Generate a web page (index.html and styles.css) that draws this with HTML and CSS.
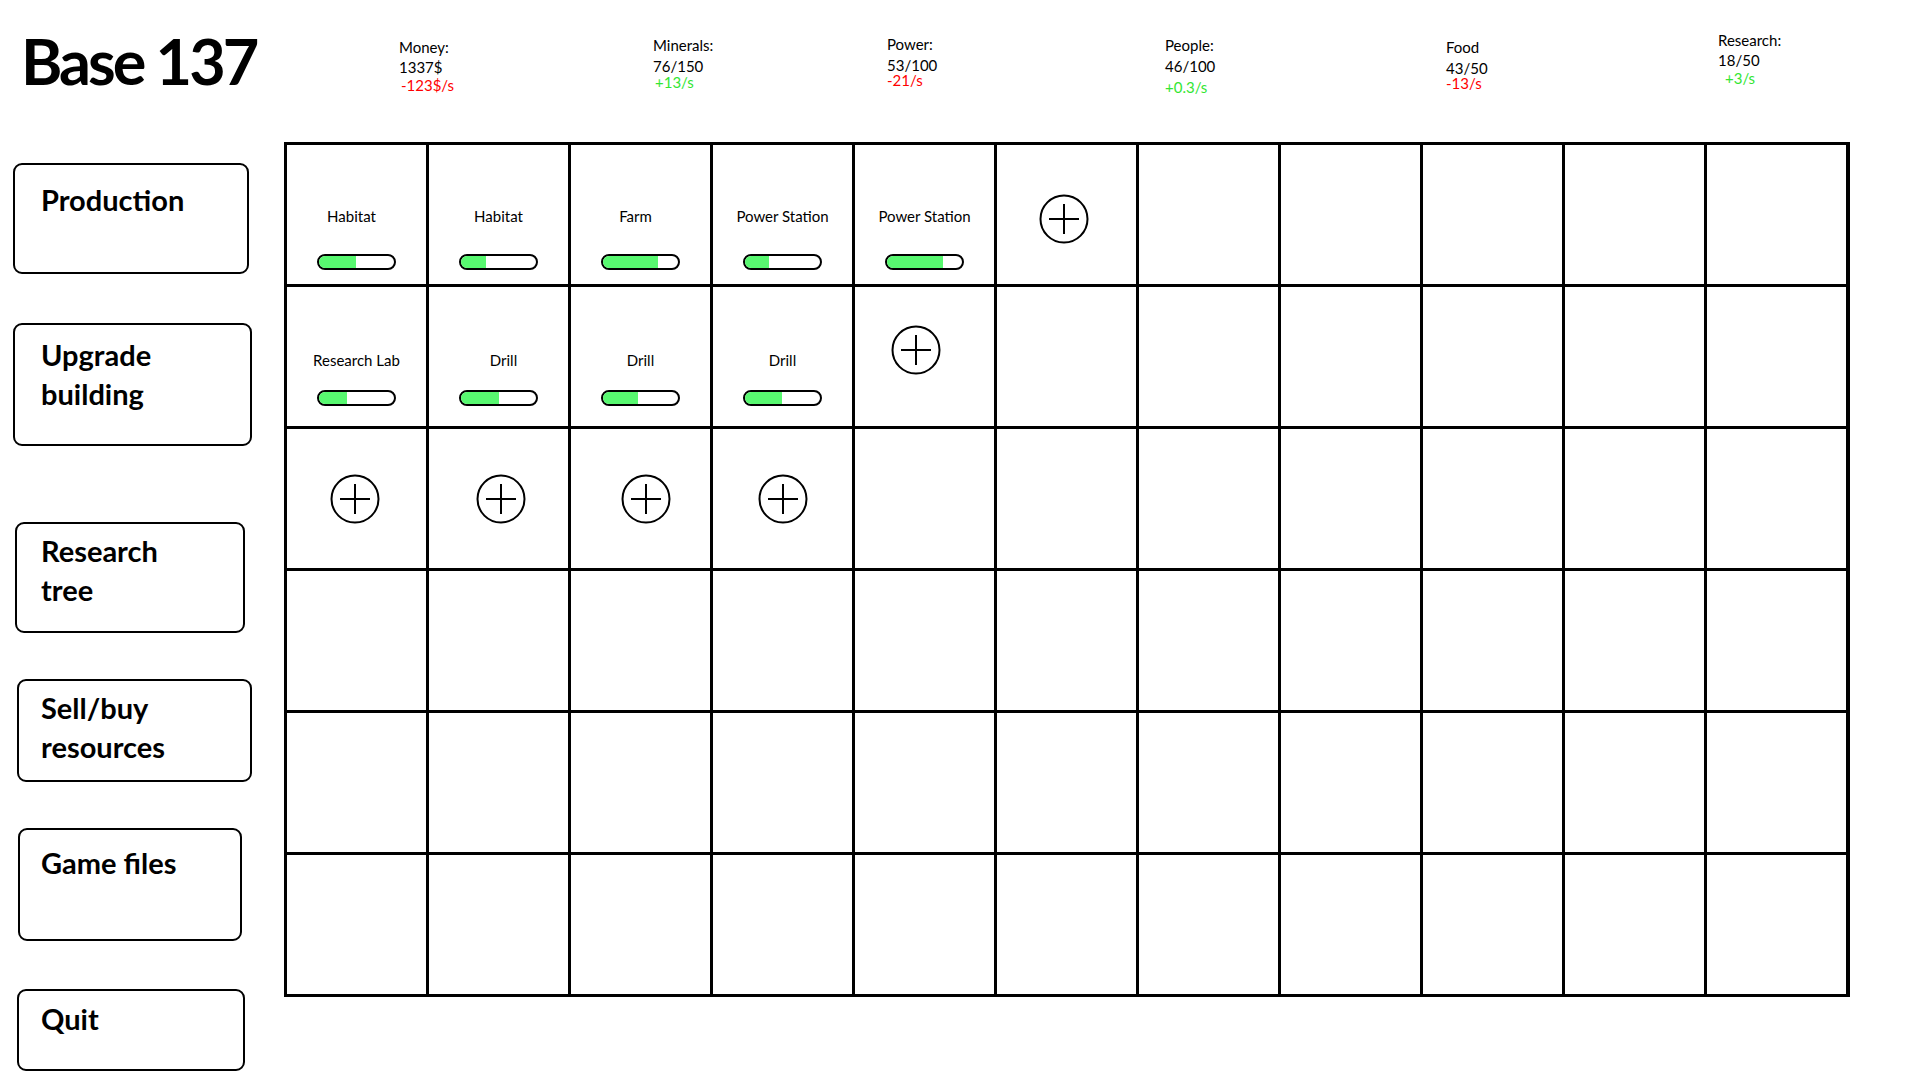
FILE: index.html
```html
<!DOCTYPE html>
<html lang="en">
<head>
<meta charset="utf-8">
<title>Base 137</title>
<link rel="stylesheet" href="styles.css">
</head>
<body>
<header class="header">
  <h1 class="title">Base 137</h1>
  <div class="stat s-money"><div class="lbl">Money:</div><div class="val">1337$</div><div class="rate neg">-123$/s</div></div>
  <div class="stat s-min"><div class="lbl">Minerals:</div><div class="val">76/150</div><div class="rate pos">+13/s</div></div>
  <div class="stat s-pow"><div class="lbl">Power:</div><div class="val">53/100</div><div class="rate neg">-21/s</div></div>
  <div class="stat s-ppl"><div class="lbl">People:</div><div class="val">46/100</div><div class="rate pos">+0.3/s</div></div>
  <div class="stat s-food"><div class="lbl">Food</div><div class="val">43/50</div><div class="rate neg">-13/s</div></div>
  <div class="stat s-res"><div class="lbl">Research:</div><div class="val">18/50</div><div class="rate pos">+3/s</div></div>
</header>
<main class="content">
  <nav class="sidebar">
    <div class="btn b-prod">Production</div>
    <div class="btn b-upg">Upgrade<br>building</div>
    <div class="btn b-res">Research<br>tree</div>
    <div class="btn b-sell">Sell/buy<br>resources</div>
    <div class="btn b-files">Game files</div>
    <div class="btn b-quit">Quit</div>
  </nav>
  <section class="board">
    <!-- row 1 -->
    <div class="cell bld r1"><div class="name nudge-l">Habitat</div><div class="bar"><div class="fill" style="width:49%"></div></div></div>
    <div class="cell bld r1"><div class="name">Habitat</div><div class="bar"><div class="fill" style="width:33%"></div></div></div>
    <div class="cell bld r1"><div class="name nudge-l">Farm</div><div class="bar"><div class="fill" style="width:73%"></div></div></div>
    <div class="cell bld r1"><div class="name">Power Station</div><div class="bar"><div class="fill" style="width:32%"></div></div></div>
    <div class="cell bld r1"><div class="name">Power Station</div><div class="bar"><div class="fill" style="width:75%"></div></div></div>
    <div class="cell add add-a"><svg class="plus" viewBox="0 0 50 50"><circle cx="25" cy="25" r="23.5"/><path d="M10 25H40M25 10V40"/></svg></div>
    <div class="cell"></div><div class="cell"></div><div class="cell"></div><div class="cell"></div><div class="cell"></div>
    <!-- row 2 -->
    <div class="cell bld r2"><div class="name">Research Lab</div><div class="bar"><div class="fill" style="width:37%"></div></div></div>
    <div class="cell bld r2"><div class="name nudge-r">Drill</div><div class="bar"><div class="fill" style="width:50%"></div></div></div>
    <div class="cell bld r2"><div class="name">Drill</div><div class="bar"><div class="fill" style="width:47%"></div></div></div>
    <div class="cell bld r2"><div class="name">Drill</div><div class="bar"><div class="fill" style="width:49%"></div></div></div>
    <div class="cell add add-b"><svg class="plus" viewBox="0 0 50 50"><circle cx="25" cy="25" r="23.5"/><path d="M10 25H40M25 10V40"/></svg></div>
    <div class="cell"></div><div class="cell"></div><div class="cell"></div><div class="cell"></div><div class="cell"></div><div class="cell"></div>
    <!-- row 3 -->
    <div class="cell add add-e"><svg class="plus" viewBox="0 0 50 50"><circle cx="25" cy="25" r="23.5"/><path d="M10 25H40M25 10V40"/></svg></div>
    <div class="cell add add-c"><svg class="plus" viewBox="0 0 50 50"><circle cx="25" cy="25" r="23.5"/><path d="M10 25H40M25 10V40"/></svg></div>
    <div class="cell add add-d"><svg class="plus" viewBox="0 0 50 50"><circle cx="25" cy="25" r="23.5"/><path d="M10 25H40M25 10V40"/></svg></div>
    <div class="cell add"><svg class="plus" viewBox="0 0 50 50"><circle cx="25" cy="25" r="23.5"/><path d="M10 25H40M25 10V40"/></svg></div>
    <div class="cell"></div><div class="cell"></div><div class="cell"></div><div class="cell"></div><div class="cell"></div><div class="cell"></div><div class="cell"></div>
    <!-- rows 4-6 -->
    <div class="cell"></div><div class="cell"></div><div class="cell"></div><div class="cell"></div><div class="cell"></div><div class="cell"></div><div class="cell"></div><div class="cell"></div><div class="cell"></div><div class="cell"></div><div class="cell"></div>
    <div class="cell"></div><div class="cell"></div><div class="cell"></div><div class="cell"></div><div class="cell"></div><div class="cell"></div><div class="cell"></div><div class="cell"></div><div class="cell"></div><div class="cell"></div><div class="cell"></div>
    <div class="cell"></div><div class="cell"></div><div class="cell"></div><div class="cell"></div><div class="cell"></div><div class="cell"></div><div class="cell"></div><div class="cell"></div><div class="cell"></div><div class="cell"></div><div class="cell"></div>
  </section>
</main>
</body>
</html>
```
FILE: styles.css
```css
* { box-sizing: border-box; }
html, body { margin: 0; padding: 0; background: #fff; }
body {
  width: 1920px;
  height: 1080px;
  overflow: hidden;
  font-family: Lato, "Open Sans", sans-serif;
  color: #000;
}

/* header */
.header {
  display: flex;
  align-items: flex-start;
  height: 142px;
}
.title {
  margin: 29px 0 0 0;
  padding-left: 21px;
  width: 399px;
  flex-shrink: 0;
  font-size: 63px;
  line-height: 63px;
  font-weight: 700;
  letter-spacing: -3px;
}
.stat {
  display: flex;
  flex-direction: column;
  font-size: 15px;
  line-height: 16px;
  flex-shrink: 0;
}
.stat .lbl { margin-bottom: 5px; }
.rate.neg { color: #ff0000; }
.rate.pos { color: #33e633; }

.s-money { width: 254px; margin-top: 39px; }
.s-money .lbl { margin-bottom: 4px; }
.s-money .rate { padding-left: 2px; margin-top: 2px; }
.s-min { width: 234px; margin-top: 37px; }
.s-min .rate { padding-left: 2px; }
.s-pow { width: 278px; margin-top: 36px; }
.s-pow .rate { margin-top: -1px; }
.s-ppl { width: 281px; margin-top: 37px; }
.s-ppl .rate { margin-top: 5px; }
.s-food { width: 272px; margin-top: 39px; }
.s-food .rate { margin-top: -1px; }
.s-res { margin-top: 32px; }
.s-res .lbl { margin-bottom: 4px; }
.s-res .rate { margin-top: 2px; padding-left: 7px; }

/* content */
.content {
  display: flex;
  align-items: flex-start;
}
.sidebar {
  width: 284px;
  flex-shrink: 0;
  display: flex;
  flex-direction: column;
  align-items: flex-start;
}
.btn {
  border: 2px solid #000;
  border-radius: 9px;
  font-size: 29px;
  line-height: 39px;
  font-weight: 700;
}
.b-prod  { margin: 21px 0 0 13px; width: 236px; height: 111px; padding: 15px 0 0 26px; }
.b-upg   { margin: 49px 0 0 13px; width: 239px; height: 123px; padding: 10px 0 0 26px; }
.b-res   { margin: 76px 0 0 15px; width: 230px; height: 111px; padding: 7px 0 0 24px; }
.b-sell  { margin: 46px 0 0 17px; width: 235px; height: 103px; padding: 7px 0 0 22px; }
.b-files { margin: 46px 0 0 18px; width: 224px; height: 113px; padding: 13px 0 0 21px; }
.b-quit  { margin: 48px 0 0 17px; width: 228px; height: 82px;  padding: 8px 0 0 22px; }

/* board */
.board {
  display: grid;
  grid-template-columns: repeat(11, 139px);
  grid-auto-rows: 139px;
  gap: 3px;
  background: #000;
  border: 3px solid #000;
  border-right-width: 4px;
}
.cell {
  background: #fff;
}
.bld {
  display: flex;
  flex-direction: column;
  align-items: center;
  font-size: 15px;
  line-height: 16px;
}
.bld.r1 { padding-top: 63px; }
.bld.r1 .bar { margin-top: 30px; }
.bld.r2 { padding-top: 65px; }
.bld.r2 .bar { margin-top: 22px; }
.name.nudge-l { margin-right: 10px; }
.name.nudge-r { margin-left: 10px; }
.bar {
  width: 79px;
  height: 16px;
  border: 2px solid #000;
  border-radius: 8px;
  overflow: hidden;
  background: #fff;
}
.fill {
  height: 100%;
  background: #58f870;
}
.add {
  display: flex;
  align-items: center;
  justify-content: center;
}
.add-a { padding: 9px 5px 0 0; }
.add-b { padding: 0 17px 14px 0; }
.add-c { padding-left: 4px; }
.add-d { padding-left: 10px; }
.add-e { padding-right: 4px; }
.plus {
  width: 50px;
  height: 50px;
  fill: none;
  stroke: #000;
  stroke-width: 2;
}
```
